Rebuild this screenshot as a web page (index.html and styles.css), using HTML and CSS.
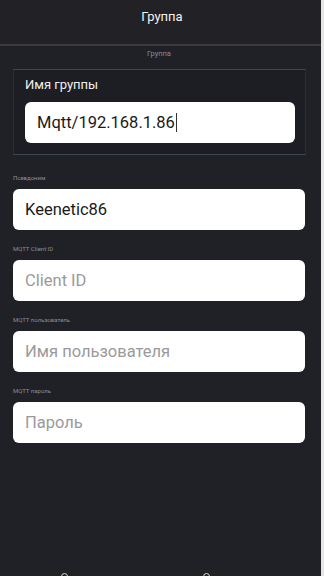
FILE: index.html
```html
<!DOCTYPE html>
<html lang="ru">
<head>
<meta charset="utf-8">
<link rel="stylesheet" href="styles.css">
</head>
<body>
<div class="screen">
  <header class="topbar">Группа</header>
  <div class="content">
    <div class="subtitle">Группа</div>
    <section class="group-box">
      <div class="group-label">Имя группы</div>
      <div class="input">Mqtt/192.168.1.86<span class="caret"></span></div>
    </section>
    <div class="field">
      <div class="small-label">Псевдоним</div>
      <div class="input">Keenetic86</div>
    </div>
    <div class="field">
      <div class="small-label">MQTT Client ID</div>
      <div class="input placeholder">Client ID</div>
    </div>
    <div class="field">
      <div class="small-label">MQTT пользователь</div>
      <div class="input placeholder">Имя пользователя</div>
    </div>
    <div class="field">
      <div class="small-label">MQTT пароль</div>
      <div class="input placeholder">Пароль</div>
    </div>
  </div>
  <nav class="bottom">
    <span class="dot"></span>
    <span class="dot"></span>
  </nav>
  <div class="edge"></div>
</div>
</body>
</html>
```
FILE: styles.css
```css
* { box-sizing: border-box; }
html, body { margin: 0; padding: 0; }
body {
  width: 324px;
  height: 576px;
  overflow: hidden;
  background: #222226;
  font-family: Roboto, "Noto Sans", sans-serif;
}
.screen {
  position: relative;
  width: 324px;
  height: 576px;
  display: flex;
  flex-direction: column;
}
.topbar {
  height: 46px;
  padding-top: 9px;
  text-align: center;
  color: #f2f2f2;
  font-size: 13px;
  background: #222226;
  border-bottom: 2px solid #3a3b3f;
}
.content {
  flex: 1;
  padding: 0 19px 0 13px;
  background: #202126;
}
.subtitle {
  text-align: center;
  color: #8a8b8f;
  font-size: 7.5px;
  padding-top: 3px;
  height: 23px;
}
.group-box {
  margin-left: 0;
  width: 293px;
  height: 86px;
  border-top: 1px solid #3c474f;
  border-bottom: 1px solid #3c474f;
  border-left: 1px solid #2a2e35;
  border-right: 1px solid #2a2e35;
  background: #1d1e23;
  padding: 7px 11px 0 11px;
}
.group-label {
  color: #f0f0f0;
  font-size: 13px;
  height: 25px;
}
.group-box .input {
  width: 270px;
  height: 41px;
  padding-left: 12px;
}
.caret {
  display: inline-block;
  width: 1px;
  height: 19px;
  background: #333;
  vertical-align: -4px;
  margin-left: 1px;
}
.field {
  padding-top: 19px;
}
.small-label {
  color: #8c8d91;
  font-size: 6px;
  height: 15px;
}
.input {
  width: 292px;
  height: 41px;
  background: #ffffff;
  border-radius: 6px;
  color: #1a1a1a;
  font-size: 16.5px;
  display: flex;
  align-items: center;
  padding-left: 12px;
}
.field + .field { padding-top: 15px; }
.input.placeholder { color: #9a9a9a; }
.bottom {
  height: 6px;
  position: relative;
}
.dot {
  position: absolute;
  top: 3px;
  width: 7px;
  height: 7px;
  border: 1.5px solid #d8d8d8;
  border-radius: 50%;
}
.dot:first-child { left: 61px; }
.dot:last-child { left: 203px; }
.edge {
  position: absolute;
  right: 0;
  top: 0;
  width: 3px;
  height: 576px;
  background: #e6e6e6;
}
```
